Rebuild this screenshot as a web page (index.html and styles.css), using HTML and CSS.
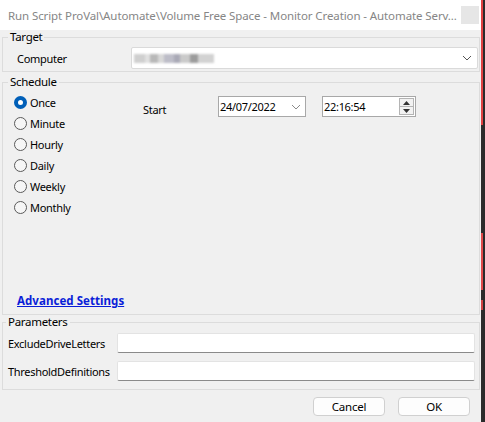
FILE: index.html
```html
<!DOCTYPE html>
<html>
<head>
<meta charset="utf-8">
<link rel="stylesheet" href="styles.css">
</head>
<body>
<div class="screen">
  <div class="dialog">
    <div class="titlebar">
      <span class="title">Run Script ProVal\Automate\Volume Free Space - Monitor Creation - Automate Serv...</span>
      <span class="close"></span>
    </div>

    <fieldset class="group target">
      <legend>Target</legend>
      <div class="row">
        <span class="lbl-computer">Computer</span>
        <div class="combo">
          <span class="blurred"></span>
          <svg class="chev" width="10" height="6" viewBox="0 0 10 6"><path d="M1 1 L5 5 L9 1" fill="none" stroke="#555" stroke-width="1"/></svg>
        </div>
      </div>
    </fieldset>

    <fieldset class="group schedule">
      <legend>Schedule</legend>
      <div class="sched-body">
        <div class="radios">
          <div class="radio checked"><span class="circle"></span><span>Once</span></div>
          <div class="radio"><span class="circle"></span><span>Minute</span></div>
          <div class="radio"><span class="circle"></span><span>Hourly</span></div>
          <div class="radio"><span class="circle"></span><span>Daily</span></div>
          <div class="radio"><span class="circle"></span><span>Weekly</span></div>
          <div class="radio"><span class="circle"></span><span>Monthly</span></div>
        </div>
        <div class="start">
          <span class="start-lbl">Start</span>
          <div class="date">
            <span>24/07/2022</span>
            <svg class="chev2" width="10" height="6" viewBox="0 0 10 6"><path d="M1 1 L5 5 L9 1" fill="none" stroke="#8a8a8a" stroke-width="1"/></svg>
          </div>
          <div class="time">
            <span>22:16:54</span>
            <div class="spin">
              <div class="spin-btn"><svg width="7" height="4" viewBox="0 0 7 4"><path d="M0 4 L3.5 0 L7 4 Z" fill="#333"/></svg></div>
              <div class="spin-btn bottom"><svg width="7" height="4" viewBox="0 0 7 4"><path d="M0 0 L3.5 4 L7 0 Z" fill="#333"/></svg></div>
            </div>
          </div>
        </div>
      </div>
      <a class="adv" href="#">Advanced Settings</a>
    </fieldset>

    <fieldset class="group params">
      <legend>Parameters</legend>
      <div class="prow"><span class="plbl">ExcludeDriveLetters</span><div class="input"></div></div>
      <div class="prow"><span class="plbl">ThresholdDefinitions</span><div class="input"></div></div>
    </fieldset>

    <div class="footer">
      <button class="btn">Cancel</button>
      <button class="btn">OK</button>
    </div>
  </div>
  <div class="strip"><div class="s1"></div><div class="s2"></div></div>
</div>
</body>
</html>
```

FILE: styles.css
```css
html, body {
  margin: 0;
  padding: 0;
  background: #f0f0f0;
}

.screen {
  display: flex;
  width: 485px;
  height: 422px;
  overflow: hidden;
}

.dialog {
  width: 481px;
  flex: none;
  background: #f0f0f0;
  display: flex;
  flex-direction: column;
  font-family: "Segoe UI", "Noto Sans", sans-serif;
  font-size: 11px;
  letter-spacing: -0.3px;
  color: #000;
}

.titlebar {
  height: 30px;
  flex: none;
  background: #fff;
  display: flex;
  align-items: center;
  justify-content: space-between;
  padding: 0 2px 0 8px;
}

.title {
  color: #868686;
  white-space: nowrap;
  font-size: 11.5px;
  letter-spacing: -0.1px;
}

.close {
  width: 18px;
  height: 18px;
  flex: none;
  background: #e6e6e6;
}

.group {
  margin: 0 1px 0 2px;
  padding: 0;
  border: 1px solid #dcdcdc;
  min-width: 0;
}

.group legend {
  margin-left: 5px;
  padding: 0 2px;
  line-height: 14px;
  font-size: 11.5px;
}

.target {
  padding: 3px 1px 2px 0;
}

.row {
  display: flex;
  align-items: center;
  justify-content: space-between;
  height: 22px;
}

.lbl-computer {
  margin-left: 14px;
  padding-top: 1px;
}

.combo {
  width: 347px;
  height: 22px;
  box-sizing: border-box;
  background: #fff;
  border: 1px solid #dadada;
  border-radius: 2px;
  display: flex;
  align-items: center;
  justify-content: space-between;
  padding: 0 5px 0 2px;
}

.blurred {
  width: 80px;
  height: 9px;
  background: linear-gradient(90deg, #cfcfcf 0 14%, #e0e0e0 14% 20%, #b8b8b8 20% 30%, #d8d8d8 30% 38%, #bdbdc8 38% 50%, #a9a9b6 50% 58%, #cacaca 58% 70%, #9c9c9c 70% 80%, #d2d2d2 80% 100%);
  filter: blur(0.8px);
}

.schedule {
  margin-top: 3px;
  padding: 3px 0 5px 0;
}

.sched-body {
  display: flex;
}

.radios {
  width: 140px;
  flex: none;
  display: flex;
  flex-direction: column;
}

.radio {
  height: 21px;
  display: flex;
  align-items: center;
  padding-left: 11px;
}

.circle {
  width: 13px;
  height: 13px;
  box-sizing: border-box;
  border: 1px solid #5a5a5a;
  border-radius: 50%;
  background: #f6f6f6;
  margin-right: 3px;
  flex: none;
}

.radio.checked .circle {
  background: #fff;
  border: 4px solid #005fb8;
}

.start {
  display: flex;
  align-items: flex-start;
  margin-top: 4px;
}

.start-lbl {
  width: 75px;
  padding-top: 6px;
}

.date {
  width: 88px;
  height: 21px;
  box-sizing: border-box;
  background: #fff;
  border: 1px solid #a8a8a8;
  display: flex;
  align-items: center;
  justify-content: space-between;
  padding: 0 4px 0 1px;
}

.time {
  width: 94px;
  height: 21px;
  box-sizing: border-box;
  margin-left: 16px;
  background: #fff;
  border: 1px solid #a8a8a8;
  display: flex;
  align-items: center;
  justify-content: space-between;
  padding: 0 1px 0 1px;
}

.spin {
  width: 15px;
  height: 17px;
  display: flex;
  flex-direction: column;
  border: 1px solid #b4b4b4;
  box-sizing: border-box;
  background: #f2f2f2;
}

.spin-btn {
  flex: 1;
  display: flex;
  align-items: center;
  justify-content: center;
}

.spin-btn.bottom {
  border-top: 1px solid #b4b4b4;
}

.adv {
  display: block;
  width: max-content;
  margin: 75px 0 0 14px;
  line-height: 16px;
  font-size: 11.5px;
  letter-spacing: 0.05px;
  font-weight: bold;
  color: #0a1ed8;
  text-decoration: underline;
}

.params {
  margin-top: 0;
  padding: 4px 0 8px 0;
}

.params legend {
  margin-left: 3px;
}

.prow {
  display: flex;
  align-items: center;
  justify-content: space-between;
  height: 20px;
  padding: 0 4px 0 5px;
}

.prow + .prow {
  margin-top: 8px;
}

.input {
  width: 358px;
  height: 20px;
  box-sizing: border-box;
  background: #fff;
  border: 1px solid #e3e3e3;
  border-bottom-color: #8a8a8a;
  border-radius: 2px;
}

.footer {
  display: flex;
  justify-content: flex-end;
  gap: 13px;
  padding: 7px 11px 0 0;
}

.btn {
  width: 72px;
  height: 19px;
  box-sizing: border-box;
  background: #fdfdfd;
  border: 1px solid #d0d0d0;
  border-radius: 4px;
  font-family: "Segoe UI", "Noto Sans", sans-serif;
  font-size: 11.5px;
  letter-spacing: -0.2px;
  line-height: 15px;
  padding: 0;
  color: #000;
}

.strip {
  display: flex;
  flex: none;
  width: 4px;
}

.s1 {
  width: 2px;
  background: linear-gradient(180deg, #e04040 0 125px, #2c2c2c 125px 233px, #e04848 233px 290px, #2c2c2c 290px 300px, #d04040 300px 310px, #2c2c2c 310px 100%);
}

.s2 {
  width: 2px;
  background: #2a2a2a;
}
```
